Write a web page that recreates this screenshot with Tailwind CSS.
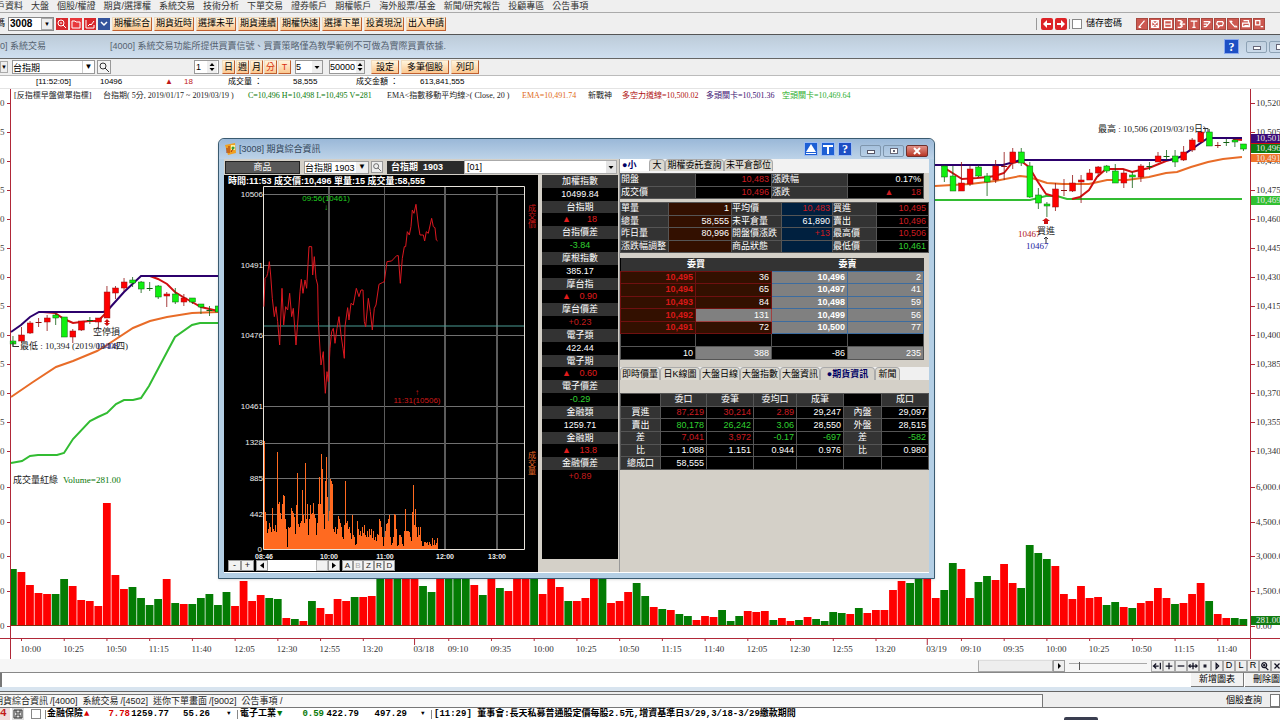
<!DOCTYPE html>
<html lang="zh-Hant">
<head>
    <meta charset="UTF-8">
    <meta name="viewport" content="width=device-width, initial-scale=1.0">
    <title>期貨綜合資訊</title>
    <script src="https://cdn.jsdelivr.net/npm/@tailwindcss/browser@4"></script>
</head>
<body class="flex flex-col h-screen overflow-hidden bg-[#efefef] text-black text-[9px] leading-none whitespace-nowrap font-['Liberation_Sans','Noto_Sans_CJK_TC',sans-serif]">

    <!-- menu bar -->
    <nav class="flex items-center gap-2 h-[13px] shrink-0 -ml-1 text-[#333] border-b border-[#aaa]">
        <a href="#">戶資料</a><a href="#">大盤</a><a href="#">個股/權證</a><a href="#">期貨/選擇權</a><a href="#">系統交易</a><a href="#">技術分析</a><a href="#">下單交易</a><a href="#">證券帳戶</a><a href="#">期權帳戶</a><a href="#">海外股票/基金</a><a href="#">新聞/研究報告</a><a href="#">投顧專區</a><a href="#">公告事項</a>
    </nav>

    <!-- main toolbar -->
    <div class="flex items-center h-[22px] shrink-0 border-b border-[#555]">
        <label for="code" class="-ml-1 mr-[3px]">碼</label>
        <span class="flex w-[46px] h-3.5 bg-white border border-[#888] mr-0.5">
            <input id="code" value="3008" class="w-8 px-px text-[10px] font-bold outline-none">
            <button class="flex-1 bg-[#eee] border border-[#aaa] text-[6px]" aria-label="開啟">▼</button>
        </span>
        <div class="flex gap-0.5 mr-0.5">
            <button class="size-3 bg-[#d8282c]" aria-label="查詢"><svg viewBox="0 0 12 12" fill="none" stroke="#fff"><circle cx="5" cy="5" r="3"/><path d="M7 7l3 3M4 5h2"/></svg></button>
            <button class="size-3 bg-[#e8383c]" aria-label="開檔"><svg viewBox="0 0 12 12" fill="none" stroke="#fff"><path d="M2 10V3h3l1 1h4v6z"/></svg></button>
            <button class="size-3 bg-[#d8282c]" aria-label="圖表"><svg viewBox="0 0 12 12" fill="none" stroke="#fff"><path d="M2 2v8h8V7M4 8l2-2 1 1 3-4"/></svg></button>
            <button class="size-3 bg-[#34549c]" aria-label="更多"><svg viewBox="0 0 12 12" fill="none" stroke="#fff" stroke-width="1.5"><path d="M3 4l3 3 3-3"/></svg></button>
        </div>
        <div id="shortcuts" class="flex gap-0.5 flex-1"></div>
        <div class="flex gap-0.5 items-center border-l border-[#999] pl-1 pr-0.5">
            <button class="size-3 bg-[#dd2226] rounded-xs" aria-label="上一頁"><svg viewBox="0 0 12 12" fill="#fff"><path d="M2 6l4-4v3h4v2H6v3z"/></svg></button>
            <button class="size-3 bg-[#dd2226] rounded-xs" aria-label="下一頁"><svg viewBox="0 0 12 12" fill="#fff"><path d="M10 6L6 2v3H2v2h4v3z"/></svg></button>
        </div>
        <label class="flex items-center gap-1 border-l border-[#888] pl-0.5 mr-3.5"><input type="checkbox" class="appearance-none size-2.5 bg-white border border-[#888]">儲存密碼</label>
        <div id="tools" class="flex gap-px mr-[15px]"></div>
    </div>

    <!-- chart window caption -->
    <div class="flex items-center h-6 shrink-0 bg-linear-to-b from-[#bccbd8] to-[#cfdff0] border-b border-[#666] text-[#556270]">
        <span class="w-[110px]">0] 系統交易</span>
        <span class="flex-1">[4000] 系統交易功能所提供買賣信號、買賣策略僅為教學範例不可做為實際買賣依據.</span>
        <button class="w-[15px] h-[15px] bg-[#1d4fc4] border border-[#8aa8ee] text-white text-xs leading-none font-bold font-['Liberation_Serif',serif] mr-[7px]">?</button>
        <button class="flex items-end justify-center w-[21px] h-3 border border-[#8da2b5] rounded-xs mr-0.5 pb-0.5" aria-label="最小化"><span class="w-2 h-1 border border-[#667] bg-white"></span></button>
        <button class="flex items-center justify-center w-[21px] h-3 border border-[#8da2b5] rounded-xs -mr-2.5" aria-label="還原"><span class="w-2 h-1.5 border border-[#667] bg-white"></span></button>
    </div>

    <!-- chart controls -->
    <div class="flex items-center h-[17px] shrink-0 border-b border-[#bbb]">
        <button class="w-2 h-3 bg-[#eee] border border-[#aaa] text-[6px] mr-1" aria-label="開啟">▼</button>
        <span class="flex w-[83px] h-3.5 bg-white border border-[#999] mr-0.5">
            <input value="台指期" aria-label="商品" class="flex-1 min-w-0 outline-none">
            <button class="w-3 border-l border-[#ccc] text-[8px]" aria-label="商品清單">▼</button>
        </span>
        <button class="size-3.5 border border-[#999] bg-[#f4f4f4] mr-[83px]" aria-label="搜尋"><svg viewBox="0 0 12 12" fill="none" stroke="#333"><circle cx="5" cy="5" r="3"/><path d="M7 7l4 4"/></svg></button>
        <span class="flex w-[25px] h-3.5 bg-white border border-[#999] mr-[3px]">
            <input value="1" aria-label="倍數" class="w-3 px-px outline-none">
            <svg viewBox="0 0 10 12" class="w-2.5 bg-[#eee]"><path d="M5 2l2.5 3h-5zM5 10l2.5-3h-5z"/></svg>
        </span>
        <div id="periods" class="flex gap-px mr-1"></div>
        <span class="flex w-7 h-3.5 bg-white border border-[#999] mr-1.5">
            <select aria-label="分鐘" class="appearance-none w-4 outline-none"><option>5</option></select>
            <svg viewBox="0 0 10 12" class="w-2.5 bg-[#eee]"><path d="M5 8l2.5-3h-5z"/></svg>
        </span>
        <span class="flex w-9 h-3.5 bg-white border border-[#999] mr-1.5">
            <input value="50000" aria-label="筆數" class="w-[26px] outline-none">
            <svg viewBox="0 0 8 12" class="w-2 bg-[#eee]"><path d="M4 2l2.5 3h-5zM4 10l2.5-3h-5z"/></svg>
        </span>
        <div id="actions" class="flex gap-0.5"></div>
    </div>

    <!-- last quote -->
    <div class="grid grid-cols-[64px_65px_19px_44px_65px_63px_64px_1fr] items-center h-3 shrink-0 pl-9 bg-white text-[8px]">
        <span>[11:52:05]</span><span>10496</span><span class="text-[#c01818]">▲</span><span class="text-[#c01818]">18</span><span>成交量 ：</span><span>58,555</span><span>成交金額 ：</span><span>613,841,555</span>
    </div>

    <main class="relative flex-1 min-h-0 bg-white border-t border-[#e4e4e4]">
        <svg id="chart" viewBox="0 89 1280 570" class="w-full h-full font-['Liberation_Serif','Noto_Sans_CJK_TC',serif] text-[9px]">
            <g id="axes"></g>
            <g id="volume"></g>
            <g fill="none" stroke-width="2">
                <path stroke="#32bc32" d="M11 463L22 461 30 456 38 455H57L64 453 73 439 90 421 98 417 107 413 116 404 124 400H133L141 398 149 386 167 352 175 337 192 325 200 323H218M935 200H1030L1046 196H1057L1067 199H1242"/>
                <path stroke="#e86c28" d="M11 397L33 382 56 367 73 361 97 351 107 345 133 328 150 321 167 317 192 313 218 312M935 186L970 184 995 181 1020 176 1029 177 1038 180 1047 183 1063 184H1089L1107 180H1127L1149 177 1166 173 1177 172 1191 167 1208 162 1223 159 1242 157"/>
                <path stroke="#d01010" d="M43 312L55 313 64 319 73 323 89 321H98L107 312M150 276L158 279 167 284 175 292 183 297 192 302 201 307 218 311M943 167L962 179 977 178 988 177 995 176 1004 173 1012 163 1021 161 1029 167 1038 182 1046 194 1053 196M1072 199L1080 197 1089 190 1097 177 1106 169H1123L1132 172 1149 168 1166 161 1177 158M1233 139L1242 140"/>
                <path stroke="#2c006c" d="M11 332L21 325 30 317 39 312H103L107 311 124 292 141 276H218M935 165H1003L1021 160H1170L1180 157 1208 138H1242"/>
            </g>
            <g id="candles"></g>
            <g fill="#222" class="text-[8px]">
                <text x="14" y="98">[反指標早盤做單指標]</text>
                <text x="103" y="98">台指期( 5分, 2019/01/17 ~ 2019/03/19 )</text>
                <text x="248" y="98" fill="#087808">C=10,496 H=10,498 L=10,495 V=281</text>
                <text x="387" y="98">EMA&lt;指數移動平均線&gt;( Close, 20 )</text>
                <text x="522" y="98" fill="#e06a20">EMA=10,491.74</text>
                <text x="588" y="98">新戰神</text>
                <text x="622" y="98" fill="#b01010">多空力道線=10,500.02</text>
                <text x="706" y="98" fill="#3c1070">多頭關卡=10,501.36</text>
                <text x="782" y="98" fill="#2cae2c">空頭關卡=10,469.64</text>
            </g>
            <g fill="#222">
                <text x="13" y="483">成交量紅綠</text>
                <text x="63" y="483" fill="#087808">Volume=281.00</text>
                <text x="93" y="335">空停損</text>
                <text x="96" y="349" fill="#2424a0">10408</text>
                <text x="20" y="349">最低 : 10,394 (2019/03/14四)</text>
                <text x="1098" y="132">最高 : 10,506 (2019/03/19日)</text>
                <text x="1018" y="237" fill="#b01818">10467</text>
                <text x="1037" y="234">買進</text>
                <text x="1026" y="249" fill="#2424a0">10467</text>
                <text x="890" y="144" fill="#2424a0">10484</text>
            </g>
            <path fill="none" stroke="#333" d="M13 342V346.5H19M1203 128.5H1208V132M1046 237v6M1044 239l2-2 2 2"/>
            <path fill="#d01010" d="M107 319l3 3h-2v1h2l-3 3-3-3h2v-1h-2zM1046 218l4 3h-2v3h-4v-3h-2z"/>
        </svg>

        <!-- 3008 window -->
        <section class="absolute left-[218px] top-[49px] w-[717px] border border-[#3a5a70] rounded-t-md bg-[#b4cfe5] px-[5px] pb-[5px] shadow-sm">
            <header class="flex items-center h-5 -mx-[5px] px-1.5 rounded-t-md bg-linear-to-b from-[#9ab8d8] to-[#bdd3e8]">
                <svg viewBox="0 0 12 12" class="size-3 mr-0.5"><path fill="#f0a020" d="M0 2l10-2 1 10-8 2z"/><path fill="#fff3a0" d="M6 2h4v5H6z"/><path stroke="#a03010" d="M2 10V5M4 10V3M6 9l3-5" fill="none"/><circle cx="8" cy="5" r="1.5" fill="#38a038"/></svg>
                <h1 class="flex-1 text-[#33475a]">[3008] 期貨綜合資訊</h1>
                <div class="flex gap-[3px] mr-2">
                    <button class="size-3.5 bg-[#1d5fd4] border border-[#9cbcf4]" aria-label="置頂"><svg viewBox="0 0 12 12"><path fill="#fff" d="M6 1l5 8H1zM1 10h10v1H1z"/></svg></button>
                    <button class="size-3.5 bg-[#1d5fd4] border border-[#9cbcf4]" aria-label="固定"><svg viewBox="0 0 12 12"><path fill="#fff" d="M1 2h10v2H7v7H5V4H1z"/></svg></button>
                    <button class="size-3.5 bg-[#1d4fc4] border border-[#9cbcf4] text-white text-xs leading-none font-bold font-['Liberation_Serif',serif]">?</button>
                </div>
                <div class="flex gap-0.5 pt-1">
                    <button class="flex items-end justify-center w-[21px] h-3 border border-[#7f96ad] rounded-xs pb-0.5" aria-label="最小化"><span class="w-2 h-1 border border-[#556] bg-white"></span></button>
                    <button class="flex items-center justify-center w-[21px] h-3 border border-[#7f96ad] rounded-xs" aria-label="最大化"><span class="flex items-center justify-center w-2 h-1.5 border border-[#667] bg-white"><span class="w-0.5 h-0.5 bg-[#667]"></span></span></button>
                    <button class="flex items-center justify-center w-[22px] h-3 border border-[#70302c] rounded-xs bg-linear-to-b from-[#e09088] to-[#b83424]" aria-label="關閉"><svg viewBox="0 0 8 8" class="size-2" stroke="#fff" stroke-width="2"><path d="M1 1l6 6M7 1L1 7"/></svg></button>
                </div>
            </header>

            <div class="flex bg-[#d4d0c8] border-b border-white">
                <div class="w-[395px] shrink-0">
                    <div class="flex items-center h-4">
                        <button class="w-[75px] h-[13px] ml-px bg-[#585858] border border-[#222] text-white mr-1">商品</button>
                        <span class="flex w-[65px] h-[13px] bg-white border border-[#999] mr-0.5">
                            <input value="台指期 1903" aria-label="商品代號" class="w-[51px] outline-none">
                            <button class="flex-1 bg-[#eee] text-[8px]" aria-label="商品清單">▼</button>
                        </span>
                        <button class="size-3 border border-[#999] bg-[#eee] mr-1" aria-label="搜尋商品"><svg viewBox="0 0 12 12" fill="none" stroke="#555"><circle cx="5" cy="5" r="3"/><path d="M7 7l4 4"/></svg></button>
                        <strong class="w-[77px] h-[13px] bg-[#2b2b2b] text-white px-1 py-0.5">台指期&nbsp; 1903</strong>
                        <span class="flex flex-1 h-3.5 bg-white border border-[#aaa] mr-0.5">
                            <select aria-label="版面" class="appearance-none flex-1 outline-none px-0.5"><option>[01]</option></select>
                            <svg viewBox="0 0 10 12" class="w-2.5 bg-[#e4e4e4]"><path d="M5 8l2.5-3h-5z"/></svg>
                        </span>
                    </div>
                    <div class="flex">
                        <div class="w-[314px] bg-black mr-1">
                            <svg id="intraday" viewBox="224 175 314 385" class="w-full block text-[9px]">
                                <text x="228" y="184" fill="#fff" class="font-bold">時間:11:53 成交價:10,496 單量:15 成交量:58,555</text>
                                <g stroke="#707070" fill="none" shape-rendering="crispEdges">
                                    <path d="M264 194.5H524M264 265H524M264 335.5H524M264 406H524M264 443H524M264 478.5H524M264 514H524"/>
                                    <path stroke="#5c5c5c" stroke-width="1.5" d="M329 187V549M384.5 187V549M445 187V549M497 187V549"/>
                                </g>
                                <path stroke="#4a9c94" d="M264 326H524"/>
                                <g id="ticks"></g>
                                <path d="M263.500 549.500V186.500H524.500V549.500z" fill="none" stroke="#e8e4dc"/>
                                <g transform="translate(215 135) scale(.3333)"><path fill="none" stroke="#dc1820" stroke-width="3" d="M147 515L150 430 155 425 158 415 163 380 167 420 172 490 178 545 183 515 188 560 194 630 201 460 206 570 212 515 218 525 224 475 230 545 235 520 243 630 250 540 255 470 259 433 264 475 270 435 275 460 282 335H290L293 420 298 365 303 430 308 450 310 560 318 690 325 650 328 720 331 775 336 710 340 740 345 640 350 590 355 580 360 625 366 580 372 545 378 600 384 640 388 670 390 575 398 518 402 555 408 505 415 510 424 460 432 485 438 465H444L448 560 452 575 460 490 466 530 472 585 478 520 483 510 492 448 502 443 508 440 516 380 530 378 545 362H550L556 445 562 370 568 335H572L577 290 583 300 588 275 592 225 597 235 603 208 610 270 615 300H625L629 318 634 290 640 295 650 250 655 275 660 278 664 315 668 318"/></g>
                                <g fill="#eee" text-anchor="end" class="text-[8px]">
                                    <text x="263" y="197">10506</text><text x="263" y="268">10491</text><text x="263" y="338">10476</text><text x="263" y="409">10461</text><text x="263" y="445">1328</text><text x="263" y="481">885</text><text x="263" y="517">442</text><text x="262" y="552">0</text>
                                </g>
                                <g fill="#eee" text-anchor="middle" class="text-[7px] font-bold">
                                    <text x="264" y="559">08:46</text><text x="329" y="559">10:00</text><text x="385" y="559">11:00</text><text x="445" y="559">12:00</text><text x="497" y="559">13:00</text>
                                </g>
                                <g text-anchor="middle" class="text-[8px]">
                                    <text x="326" y="201" fill="#20d020">09:56(10461)</text><text x="326" y="210" fill="#20d020">↓</text>
                                    <text x="417" y="395" fill="#d01818">↑</text><text x="417" y="403" fill="#d01818">11:31(10506)</text>
                                    <g fill="#d01818"><text x="532" y="211">成</text><text x="532" y="219">交</text><text x="532" y="227">價</text></g>
                                    <g fill="#e86c28"><text x="532" y="458">成</text><text x="532" y="466">交</text><text x="532" y="474">量</text></g>
                                </g>
                            </svg>
                            <div class="flex h-3 px-1 text-[#222]">
                                <button class="w-[13px] h-[11px] bg-[#f2f2f2] border border-[#999]">-</button>
                                <button class="w-[13px] h-[11px] bg-[#f2f2f2] border border-[#999] mr-0.5">+</button>
                                <button class="w-3 h-[11px] bg-[#f2f2f2] border border-[#999]" aria-label="向左"><svg viewBox="0 0 10 9"><path d="M3 4.500l4-3v6z"/></svg></button>
                                <span class="w-12 h-[11px] bg-white"></span>
                                <span class="w-3 h-[11px] bg-[#f2f2f2] border border-[#bbb]"></span>
                                <button class="w-3 h-[11px] bg-[#f2f2f2] border border-[#999] mr-0.5" aria-label="向右"><svg viewBox="0 0 10 9"><path d="M7 4.500l-4-3v6z"/></svg></button>
                                <button class="w-[11px] h-[11px] bg-[#f2f2f2] border border-[#999] text-[8px]">A</button>
                                <button class="w-[10px] h-[11px] bg-[#f2f2f2] border border-[#999] text-[8px] text-[#aaa]">B</button>
                                <button class="w-[11px] h-[11px] bg-[#f2f2f2] border border-[#999] text-[8px]">Z</button>
                                <button class="w-[10px] h-[11px] bg-[#f2f2f2] border border-[#999] text-[8px]">R</button>
                                <button class="w-[11px] h-[11px] bg-[#f2f2f2] border border-[#999] text-[8px]">D</button>
                            </div>
                        </div>
                        <div class="w-[76px] h-[384px] bg-black">
                            <dl id="indices" class="grid auto-rows-fr h-[308px] text-center text-white"></dl>
                        </div>
                    </div>
                </div>

                <div class="flex-1 min-w-0 border-l border-[#999]">
                    <div class="flex h-3.5 items-end bg-[#f2f2f2] pb-0.5">
                        <button class="w-[29px] h-3 pl-0.5 bg-white font-bold text-left text-[#000064]">●小</button>
                        <button class="w-4 h-3 bg-[#dcd9d0] border-x border-t border-[#aaa] rounded-t-sm">大</button>
                        <button class="w-[59px] h-3 bg-[#dcd9d0] border-x border-t border-[#aaa] rounded-t-sm">期權委託查詢</button>
                        <button class="w-[49px] h-3 bg-[#dcd9d0] border-x border-t border-[#aaa] rounded-t-sm">未平倉部位</button>
                    </div>
                    <table class="table-fixed w-[304px] h-[26px] bg-black text-white">
                        <colgroup><col class="w-[75px]"><col class="w-[76px]"><col class="w-[76px]"><col></colgroup>
                        <tbody id="summary"></tbody>
                    </table>
                    <table class="table-fixed w-full h-[51px] mt-[3px] bg-black text-white">
                        <colgroup><col class="w-12"><col class="w-[63px]"><col class="w-[50px]"><col class="w-[51px]"><col class="w-11"><col></colgroup>
                        <tbody id="detail"></tbody>
                    </table>
                    <table class="table-fixed w-[304px] h-[102px] mt-[5px] bg-black text-white">
                        <colgroup><col class="w-[75px]"><col class="w-[76px]"><col class="w-[76px]"><col></colgroup>
                        <thead><tr class="bg-[#333] h-[13px]"><th colspan="2">委買</th><th colspan="2">委賣</th></tr></thead>
                        <tbody id="depth"></tbody>
                    </table>
                    <div id="tabs" class="flex mt-[7px] bg-[#f0f0f0]"></div>
                    <table class="table-fixed w-full h-[77px] mt-[13px] bg-black text-white">
                        <colgroup><col class="w-10"><col class="w-[46px]"><col class="w-[47px]"><col class="w-[43px]"><col class="w-[47px]"><col class="w-[38px]"><col></colgroup>
                        <tbody id="orders"></tbody>
                    </table>
                </div>
            </div>
        </section>
    </main>

    <!-- scroll strip -->
    <div class="flex items-center justify-end h-3.5 shrink-0 bg-[#f6f6f6] border-b border-[#888]">
        <span class="w-[75px] h-3 bg-[#eee] border border-[#aaa] border-t-[#ddd]"></span>
        <button class="w-3 h-3 bg-[#eee] border border-[#999]" aria-label="捲動"><svg viewBox="0 0 10 10"><path d="M7 5L4 2v6z"/></svg></button>
        <input type="range" aria-label="縮放" value="13" class="w-[78px] h-3 mx-1 appearance-none bg-transparent bg-linear-to-b from-transparent from-25% via-[#999] via-30% to-transparent to-35% [&::-webkit-slider-thumb]:appearance-none [&::-webkit-slider-thumb]:w-px [&::-webkit-slider-thumb]:h-2 [&::-webkit-slider-thumb]:bg-[#555]">
        <div id="nav" class="flex -mr-[3px]"></div>
    </div>
    <div class="flex justify-end h-3.5 shrink-0 bg-white border-l-2 border-[#777]">
        <button class="w-[53px] bg-[#f2f2f2] border-r border-b border-[#777] mr-px">新增圖表</button>
        <button class="w-[35px] bg-[#f2f2f2] border-b border-[#777] pl-2 text-left overflow-hidden">刪除圖表</button>
    </div>
    <div class="h-[5px] shrink-0 bg-[#d8e4ef] border-b border-[#666]"></div>

    <!-- open pages -->
    <div class="flex items-stretch h-4 shrink-0 pt-0.5 bg-[#eee] border-b border-[#777]">
        <div class="flex items-center flex-1 bg-[#f8f8f8] border-t border-r border-[#777] text-[#222]">
            <a href="#" class="-ml-1.5">期貨綜合資訊</a><a href="#" class="ml-0.5">/[4000]&nbsp; 系統交易</a><a href="#" class="ml-0.5">/[4502]&nbsp; 迷你下單畫面</a><a href="#" class="ml-0.5">/[9002]&nbsp; 公告事項&nbsp;/</a>
        </div>
        <label for="stock" class="w-[227px] pt-0.5 pr-2 text-right">個股查詢</label>
        <input id="stock" class="w-2.5 bg-white border border-[#777]">
    </div>

    <!-- ticker -->
    <div class="relative flex items-center h-3 shrink-0 bg-white font-bold font-['Liberation_Mono','Noto_Sans_CJK_TC',monospace]">
        <span class="w-2.5 h-3 bg-[#f0dcdc] text-[#c01818] text-[11px]">4</span>
        <svg viewBox="0 0 12 12" class="size-3 ml-0.5 mr-[7px] bg-[#ddd]" fill="none" stroke="#333"><path d="M2 10V2h8v8zM4 2v3h4V2M4 10V7h4v3"/></svg>
        <input type="checkbox" aria-label="鎖定" class="appearance-none size-2.5 border border-[#888] mr-1">
        <div class="grid grid-cols-[37px_12px_1fr_39px_41px_17px_10px] items-center w-[192px] pl-px border-l border-[#888]">
            <span>金融保險</span><span class="text-[#d80000]">▲</span><span class="text-right text-[#d80000]">7.78</span><span class="text-right">1259.77</span><span class="text-right">55.26</span><span></span><span class="text-[6px]">▼</span>
        </div>
        <div class="grid grid-cols-[37px_12px_1fr_35px_48px_14px_10px] items-center w-[194px] pl-0.5 border-l border-[#888]">
            <span>電子工業</span><span class="text-[#087808]">▼</span><span class="text-right text-[#087808]">0.59</span><span class="text-right">422.79</span><span class="text-right">497.29</span><span></span><span class="text-[6px]">▼</span>
        </div>
        <span class="pl-0.5 border-l border-[#888]">[11:29] 董事會:長天私募普通股定價每股2.5元,增資基準日3/29,3/18-3/29繳款期間</span>
        <span class="absolute bottom-0 left-[1064px] w-[34px] h-[3px] rounded-t-xs bg-[#3a3e50]"></span>
    </div>

    <script>
        const $ = id => document.getElementById(id);
        const barX = i => 21.5 + 8.545 * (i - 1);

        // toolbar buttons
        const orange = "h-3.5 bg-linear-to-b from-[#fff4dc] to-[#fbc890] border border-[#f0dcc0] border-r-[#c06030] border-b-[#c06030]";
        $("shortcuts").innerHTML = ["期權綜合", "期貨近時", "選擇未平", "期貨連續", "期權快速", "選擇下單", "投資現況", "出入申請"]
            .map(t => `<button class="w-10 ${orange}">${t}</button>`).join("");
        $("periods").innerHTML = ["日", "週", "月", "分", "T"]
            .map(t => `<button class="w-[13px] ${orange} ${t === "分" || t === "T" ? "text-[#d83010]" : ""}">${t}</button>`).join("");
        $("actions").innerHTML = `<button class="w-7 ${orange}">設定</button><button class="w-12 ${orange}">多筆個股</button><button class="w-7 ${orange}">列印</button>`;

        const toolIcons = {
            "畫線": "M2 10L9 2M2 10h3", "刪除": "M2 2h8v8H2zM3 3l6 6M9 3L3 9", "儲存": "M2 2h8v8H2zM3 6h6",
            "匯出": "M2 2h4v8H2M5 6h6M8 3l-3 3 3 3", "文字": "M2 2.5h8M6 2v8M4 10h4", "編輯": "M2 3h7M2 6h4M2 9h3M5 9l5-6",
            "訊息": "M3 3h6l1 2-1 3H6l-2 2V8L2 6z", "設定": "M2 2l2 3 5 5M4 2l1 2M9 8l2 2", "列印": "M3 2h6v3M2 5h8v4H2zM4 8h5", "視窗": "M2 2h5v5H2zM8 9h3"
        };
        $("tools").innerHTML = Object.entries(toolIcons).map(([name, d]) =>
            `<button aria-label="${name}" class="w-3 h-3 bg-[#cc5850] border border-[#a84840]"><svg viewBox="0 0 12 12" fill="none" stroke="#fff" stroke-width="1.5"><path d="${d}"/></svg></button>`).join("");

        const navIcons = ["M1 6h7M5 3L2 6l3 3M10 2v8", "M6 2v8M2 6h8", "M2 6h8", "M6 2v8M1 6h10M3 4L1 6l2 2M9 4l2 2-2 2", "M5 5h2v2H5z", "M5 3l3 3-3 3z",
            "D", "L", "R", "M5 2a3 3 0 1 0 .1 0M7 8l3 3M3.500 5h3M5 3.500v3", "M3 3l6 6M9 3L3 9"];
        $("nav").innerHTML = navIcons.map(d => d.length === 1
            ? `<button class="size-3 bg-[#eee] border border-[#aaa]">${d}</button>`
            : `<button aria-label="圖表工具" class="size-3 bg-[#eee] border border-[#aaa]"><svg viewBox="0 0 12 12" fill="none" stroke="#112" stroke-width="1.5"><path d="${d}"/></svg></button>`).join("");

        // axes
        const prices = [[103, "10,520"], [132, "10,505"], [161, "10,490"], [190, "10,475"], [219, "10,460"], [248, "10,445"], [277, "10,430"], [306, "10,415"], [335, "10,400"],
            [364, "10,385"], [393, "10,370"], [422, "10,355"], [451, "10,340"], [487, "6,000.0"], [522, "4,500.0"], [556, "3,000.0"], [591, "1,500.0"], [626, "0.00"]];
        let axes = `<path d="M10.500 88V659M1250.500 88V659M0 638.500H1280" stroke="#b02838" fill="none"/>`;
        prices.forEach(([y, label]) => {
            axes += `<path d="M7 ${y}.5h4M1251 ${y}.5h4" stroke="#b02838"/><text x="0" y="${y + 3}" fill="#444">${label.slice(-1)}</text><text x="1256" y="${y + 3}" fill="#333">${label}</text>`;
        });
        const hours = ["09:10", "09:35", "10:00", "10:25", "10:50", "11:15", "11:40", "12:05", "12:30", "12:55", "13:20"];
        const times = [[47, "03/18"], [107, "03/19"]];
        hours.slice(2).forEach((t, k) => times.push([1 + 5 * k, t]));
        hours.forEach((t, k) => times.push([51 + 5 * k, t]));
        hours.slice(0, 7).forEach((t, k) => times.push([111 + 5 * k, t]));
        times.forEach(([i, t]) => {
            axes += `<path d="M${barX(i)} 638v${t.includes("/") ? 7 : 3}" stroke="#b02838"/><text x="${barX(i) - 1}" y="652" fill="#333">${t}</text>`;
        });
        [[134, 9, "#3c0a78", "10,501"], [144, 9, "#107c10", "10,496"], [154, 8, "#f07428", "10,491"], [196, 9, "#30c030", "10,469"], [616, 9, "#107c10", "281.00"]].forEach(([y, h, fill, t]) => {
            axes += `<rect x="1251" y="${y}" width="29" height="${h}" fill="${fill}"/><text x="1256" y="${y + 7}" fill="#e8e8e8">${t}</text>`;
        });
        $("axes").innerHTML = axes + `<path d="M1251 143.500h29" stroke="#d01010"/>`;

        // volume, r = up bar, g = down bar
        const volume = `g57 r54 r41 r33 r32 g32 g47 r40 r26 r25 r20 r123 r51 r37 g39 g28 g21 g27 r47 g23 r22 g22 g28 g32 g21 g34 r20 r45 r25 r31 g28 g27 r8 g7 r5 g25 r18 r12 r27 r25 g29 r29 r30 g56 r60 g60 r60 r60 g40 g34
            r60 g60 g60 g60 r41 g31 r60 g38 r35 r60 r60 g60 r32 r60 r39 g25 r25 r28 r48 g47 r23 r25 r34 g43 g30 r19 g17 r16 g12 g10 r6 r10 r9 g16 g5 g10 r15 r14 r15 g6 r8 r5 g6 r9 g7 g5 g14 g13 r12 g18
            r13 r16 r16 r36 r45 g43 g60 r60 r28 g36 g63 r57 r28 g44 g50 r46 r62 r43 g38 g81 g73 g67 r60 r32 r27 r40 r28 r29 g21 g24 r19 g18 r23 r25 r38 r28 g22 r23 r32 r43 g25 r12 r8 g8 g7`.split(/\s+/);
        $("volume").innerHTML = volume.map((v, i) => {
            const h = +v.slice(1), x = Math.max(11, barX(i) - 4);
            return `<rect x="${x}" y="${626 - h}" width="${barX(i) + 3.8 - x}" height="${h}" fill="${v[0] === "r" ? "#fe0000" : "#047c04"}"/>`;
        }).join("") + `<path d="M11 625.500H1246" stroke="#803010"/>`;

        // candles: index, colour, body top, body bottom, high, low
        const candles = `0g 341 344 336 347,1r 335 341 327 343,2r 323 333 321 334,3r 322 323 318 327,4r 318 322 315 331,5g 315 318 313 325,6g 317 337 317 337,7r 331 337 329 343,8r 321 330 321 331,9g 320 321 317 324,
            10r 318 322 318 328,11r 292 318 286 318,12r 288 293 286 299,13r 282 288 278 291,14g 280 283 277 287,15g 282 289 281 293,16g 288 289 282 291,17g 286 297 285 299,18r 294 296 292 307,19g 294 302 288 304,
            20r 298 302 294 306,21g 298 302 298 304,22g 304 307 304 314,23g 310 311 306 316,24g 306 312 306 312,
            109g 166 177 165 182,110g 176 191 166 191,111r 183 191 162 191,112r 169 184 166 186,113g 167 176 165 177,114g 176 182 173 196,115r 166 180 160 183,116r 166 167 152 180,117r 152 163 148 169,118g 152 163 148 166,
            119g 166 197 162 198,120g 195 203 188 209,121g 204 206 202 217,122r 189 207 183 211,123r 190 191 179 196,124r 183 191 175 192,125r 180 182 175 203,126r 173 180 169 180,127r 167 173 166 177,128g 166 171 165 173,
            129g 171 183 164 183,130r 173 183 169 188,131g 175 177 172 188,132r 166 177 164 182,133g 166 167 162 170,134r 156 162 152 162,135g 156 157 150 160,136g 156 162 150 167,137r 152 160 146 161,138r 140 150 138 152,
            139r 132 142 131 143,140g 132 146 129 146,141r 145 146 142 148,142g 142 143 139 146,143g 140 142 139 147,144g 144 149 144 151`.split(",");
        $("candles").innerHTML = candles.map(c => {
            const [id, top, bottom, high, low] = c.trim().split(" ");
            const x = barX(parseInt(id)), up = id.endsWith("r"), line = up ? "#901010" : "#106010";
            const body = bottom - top < 2
                ? `<path d="M${x - 3} ${+top + .5}h6" stroke="${line}"/>`
                : `<rect x="${x - 2.8}" y="${top}" width="5.800" height="${bottom - top}" fill="${up ? "#fe0000" : "#10f010"}" stroke="${line}" stroke-width=".5"/>`;
            return `<path d="M${x} ${high}V${low}" stroke="${line}" stroke-width=".8"/>${body}`;
        }).join("");

        // minute volume of the small chart
        const minutes = [108,37,28,16,20,26,22,17,41,20,18,24,17,97,45,47,36,30,45,54,53,30,20,2,22,21,22,41,38,36,32,15,44,76,25,22,26,28,59,34,26,86,30,45,14,30,44,35,36,46,35,31,14,26,45,72,45,95,80,35,20,68,92,52,28,38,70,68,65,20,17,22,15,20,33,30,26,22,12,10,24,68,26,28,20,22,16,10,34,14,12,4,5,28,20,14,18,13,22,16,24,14,12,18,12,20,14,20,11,18,9,12,8,15,14,30,28,22,12,3,12,18,25,26,30,34,12,4,6,12,35,34,20,3,4,14,14,12,5,3,18,40,18,18,18,17,12,8,37,64,24,40,22,12,22,14,22,8,3,3,7,7,6,7,4,7,5,3,11,4,9,4,6,11];
        $("ticks").innerHTML = `<path stroke="#ff6a20" shape-rendering="crispEdges" d="${minutes.map((h, k) => `M${264.5 + k} 549v-${h}`).join("")}"/>`;

        // indices column
        const indices = [["加權指數", "10499.84"], ["台指期", "18", "up"], ["台指價差", "-3.84", "down"], ["摩根指數", "385.17"], ["摩台指", "0.90", "up"], ["摩台價差", "+0.23", "plus"],
            ["電子類", "422.44"], ["電子期", "0.60", "up"], ["電子價差", "-0.29", "down"], ["金融類", "1259.71"], ["金融期", "13.8", "up"], ["金融價差", "+0.89", "plus"]];
        const tones = { up: "justify-between pl-5 pr-[21px] text-[#e01c1c]", plus: "justify-center text-[#c41c1c]", down: "justify-center text-[#30d030]" };
        $("indices").innerHTML = indices.map(([name, value, tone]) =>
            `<dt class="flex items-center justify-center bg-[#333]">${name}</dt><dd class="flex items-center ${tones[tone] || "justify-center"}">${tone === "up" ? "<span>▲</span>" : ""}<span>${value}</span></dd>`).join("");

        // cell text prefix: # label, r red, g green, w white
        const colours = { r: "text-[#cc1c20]", g: "text-[#30d030]", w: "text-white" };
        const cell = (t, bg = "") => t[0] === "#"
            ? `<th class="p-0 border border-[#555] font-normal bg-[#333] text-left">${t.slice(1)}</th>`
            : `<td class="p-0 pr-0.5 border border-[#555] text-right ${bg} ${colours[t[0]] || ""}">${t.slice(1)}</td>`;

        $("summary").innerHTML = [["#開盤", "r10,483", "#漲跌幅", "w0.17%"], ["#成交價", "r10,496", "#漲跌", "r▲&nbsp; &nbsp; &nbsp; &nbsp;18"]]
            .map(r => `<tr>${r.map(t => cell(t)).join("")}</tr>`).join("");
        $("detail").innerHTML = [["#單量", "w1", "#平均價", "r10,483", "#買進", "r10,495"], ["#總量", "w58,555", "#未平倉量", "w61,890", "#賣出", "r10,496"],
            ["#昨日量", "w80,996", "#開盤價漲跌", "r+13", "#最高價", "r10,506"], ["#漲跌幅調整", "w", "#商品狀態", "w", "#最低價", "g10,461"]]
            .map(r => `<tr>${r.map((t, k) => cell(t, k === 1 ? "bg-[#331000]" : k === 3 ? "bg-[#00203f]" : "")).join("")}</tr>`).join("");

        const bid = "p-0 pr-0.5 border border-[#701010] bg-[#331000] text-right";
        const ask = "p-0 pr-0.5 border border-[#3c6ca0] bg-[#808080] text-right";
        $("depth").innerHTML = [["10,495", 36, "10,496", 2], ["10,494", 65, "10,497", 41], ["10,493", 84, "10,498", 59], ["10,492", 131, "10,499", 56], ["10,491", 72, "10,500", 77]].map(([b, bq, a, aq]) =>
            `<tr><td class="${bid} font-bold text-[#d81818]">${b}</td><td class="${bq > 100 ? "p-0 pr-0.5 border border-[#a04040] bg-[#808080] text-right" : bid}">${bq}</td><td class="${ask} font-bold">${a}</td><td class="${ask}">${aq}</td></tr>`).join("")
            + `<tr class="h-[13px]">${cell("w").repeat(4)}</tr><tr>${cell("w10")}${cell("w388", "bg-[#808080]")}${cell("w-86")}${cell("w235", "bg-[#808080]")}</tr>`;

        $("tabs").innerHTML = ["即時價量", "日K線圖", "大盤日線", "大盤指數", "大盤資訊", "●期貨資訊", "新聞"].map(t =>
            `<button class="h-[13px] border-x border-t border-[#aaa] rounded-t-sm ${t[0] === "●" ? "w-[55px] bg-[#d4d0c8] font-bold text-[#000064]" : t === "新聞" ? "w-[25px] bg-[#dcd9d0]" : "w-10 bg-[#dcd9d0]"}">${t}</button>`).join("");

        const head = t => `<th class="p-0 border border-[#555] font-normal ${t ? "bg-[#333]" : ""}">${t}</th>`;
        $("orders").innerHTML = `<tr>${["", "委口", "委筆", "委均口", "成筆", "", "成口"].map(head).join("")}</tr>`
            + [["買進", "r87,219", "r30,214", "r2.89", "w29,247", "內盤", "w29,097"], ["賣出", "g80,178", "g26,242", "g3.06", "w28,550", "外盤", "w28,515"],
                ["差", "r7,041", "r3,972", "g-0.17", "g-697", "差", "g-582"], ["比", "w1.088", "w1.151", "w0.944", "w0.976", "比", "w0.980"], ["總成口", "w58,555", "w", "w", "w", "", "w"]]
                .map(r => `<tr>${r.map((t, k) => k === 0 || k === 5 ? head(t) : cell(t)).join("")}</tr>`).join("");
    </script>
</body>
</html>
